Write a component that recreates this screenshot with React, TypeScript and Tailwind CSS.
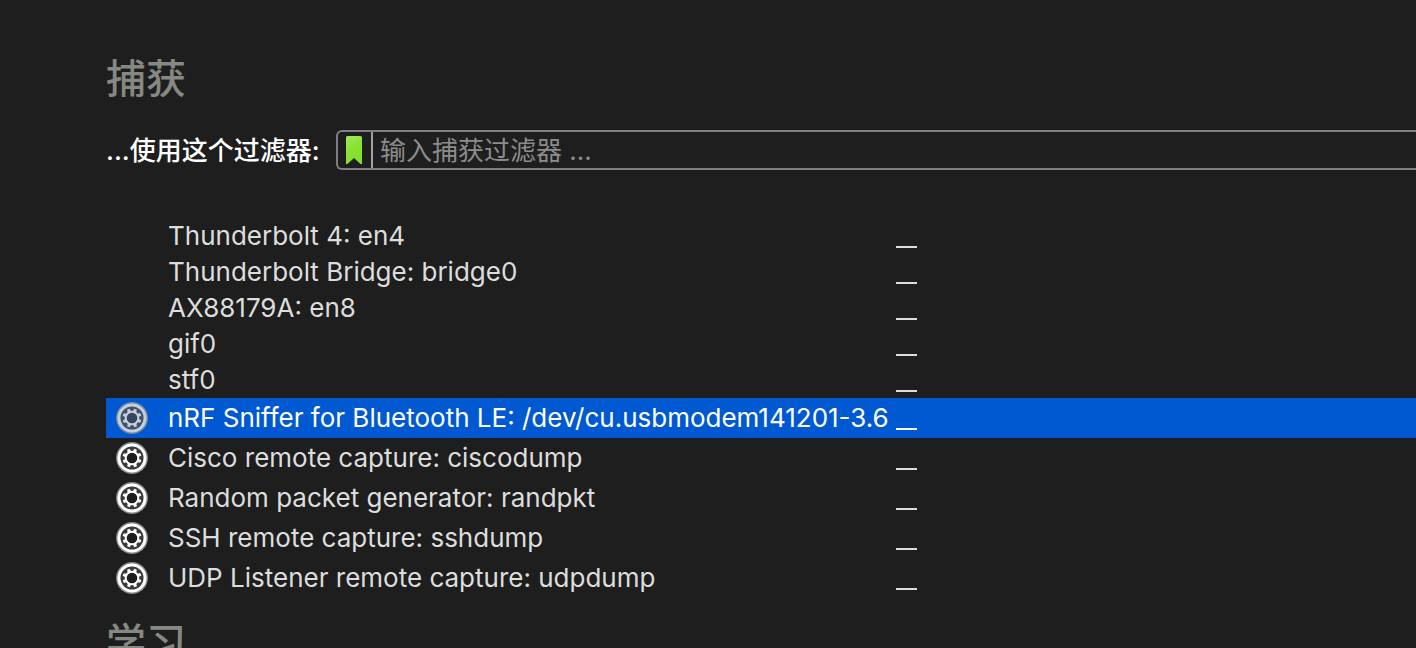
const ordinary = ['Thunderbolt 4: en4', 'Thunderbolt Bridge: bridge0', 'AX88179A: en8', 'gif0', 'stf0'];

const extcap = [
  { name: 'nRF Sniffer for Bluetooth LE: /dev/cu.usbmodem141201-3.6', selected: true },
  { name: 'Cisco remote capture: ciscodump', selected: false },
  { name: 'Random packet generator: randpkt', selected: false },
  { name: 'SSH remote capture: sshdump', selected: false },
  { name: 'UDP Listener remote capture: udpdump', selected: false },
];

const teeth = [22, 67, 112, 157, 202, 247, 292, 337];

function GearIcon({ selected }: { selected: boolean }) {
  const light = selected ? '#c5cfdd' : '#ffffff';
  const face = selected ? '#415266' : '#3b3b3b';
  const hole = selected ? '#35475d' : '#1e1e1e';
  return (
    <svg viewBox="0 0 32 32" className="block size-8" aria-hidden="true">
      <circle cx="16" cy="16" r="16" fill={selected ? '#76879f' : '#858585'} />
      <circle cx="16" cy="16" r="14.6" fill={light} />
      <circle cx="16" cy="16" r="11.5" fill={face} />
      {teeth.map((a) => (
        <path key={a} d="M14.6 6.500h2.800l.4 3.500h-3.600z" fill={light} transform={`rotate(${a} 16 16)`} />
      ))}
      <circle cx="16" cy="16" r="6.3" fill={hole} stroke={light} strokeWidth="2" />
    </svg>
  );
}

function Trace() {
  return <span className="block h-0.5 w-[21px] bg-current" />;
}

export default function App() {
  return (
    <main className="h-screen overflow-hidden bg-[#1e1e1e] pt-[55px] pl-[106px] font-['Inter','Noto_Sans_CJK_SC',sans-serif] text-[#dddddd]">
      <h1 className="text-[40px] leading-[48px] font-medium text-[#868882]">捕获</h1>

      <div className="mt-[27px] flex h-10 items-center text-[26px]">
        <label htmlFor="filter" className="w-[230px] shrink-0 font-medium whitespace-nowrap text-white">
          ...使用这个过滤器:
        </label>
        <div className="flex h-10 min-w-0 grow items-center rounded-l-md border-2 border-r-0 border-[#808080]">
          <button type="button" aria-label="书签" className="flex h-9 w-[33px] shrink-0 items-center pl-2">
            <svg viewBox="0 0 16 28" className="h-7 w-4" aria-hidden="true">
              <defs>
                <linearGradient id="bookmark" x1="0" y1="0" x2="0.4" y2="1">
                  <stop offset="0" stopColor="#a5e95c" />
                  <stop offset="0.5" stopColor="#8ae234" />
                  <stop offset="1" stopColor="#84df2b" />
                </linearGradient>
              </defs>
              <path d="M1.5 0h13Q16 0 16 1.500V28h-1.500L8 22 1.500 28H0V1.500Q0 0 1.500 0z" fill="url(#bookmark)" />
            </svg>
          </button>
          <input
            id="filter"
            type="text"
            placeholder="输入捕获过滤器 ..."
            className="h-9 min-w-0 grow border-l-2 border-[#a0a0a0] bg-transparent pl-[7px] text-[#dddddd] outline-none placeholder:text-[#8c8c8c]"
          />
        </div>
      </div>

      <table className="mt-12 w-full border-collapse text-[26px]">
        <tbody>
          {ordinary.map((name) => (
            <tr key={name} className="h-9 leading-9">
              <td className="w-[62px] p-0" />
              <td className="w-[728px] p-0 whitespace-nowrap">{name}</td>
              <td className="p-0 pb-1.5 align-bottom">
                <Trace />
              </td>
            </tr>
          ))}
          {extcap.map(({ name, selected }) => (
            <tr key={name} className={selected ? 'h-10 bg-[#0059d1] leading-10 text-white' : 'h-10 leading-10'}>
              <td className="w-[62px] p-0 pl-2.5">
                <button type="button" aria-label={name} className="block">
                  <GearIcon selected={selected} />
                </button>
              </td>
              <td className="w-[728px] p-0 whitespace-nowrap">{name}</td>
              <td className="p-0 pb-2 align-bottom">
                <Trace />
              </td>
            </tr>
          ))}
        </tbody>
      </table>

      <h2 className="mt-[21px] text-[40px] leading-[48px] font-medium text-[#868882]">学习</h2>
    </main>
  );
}
